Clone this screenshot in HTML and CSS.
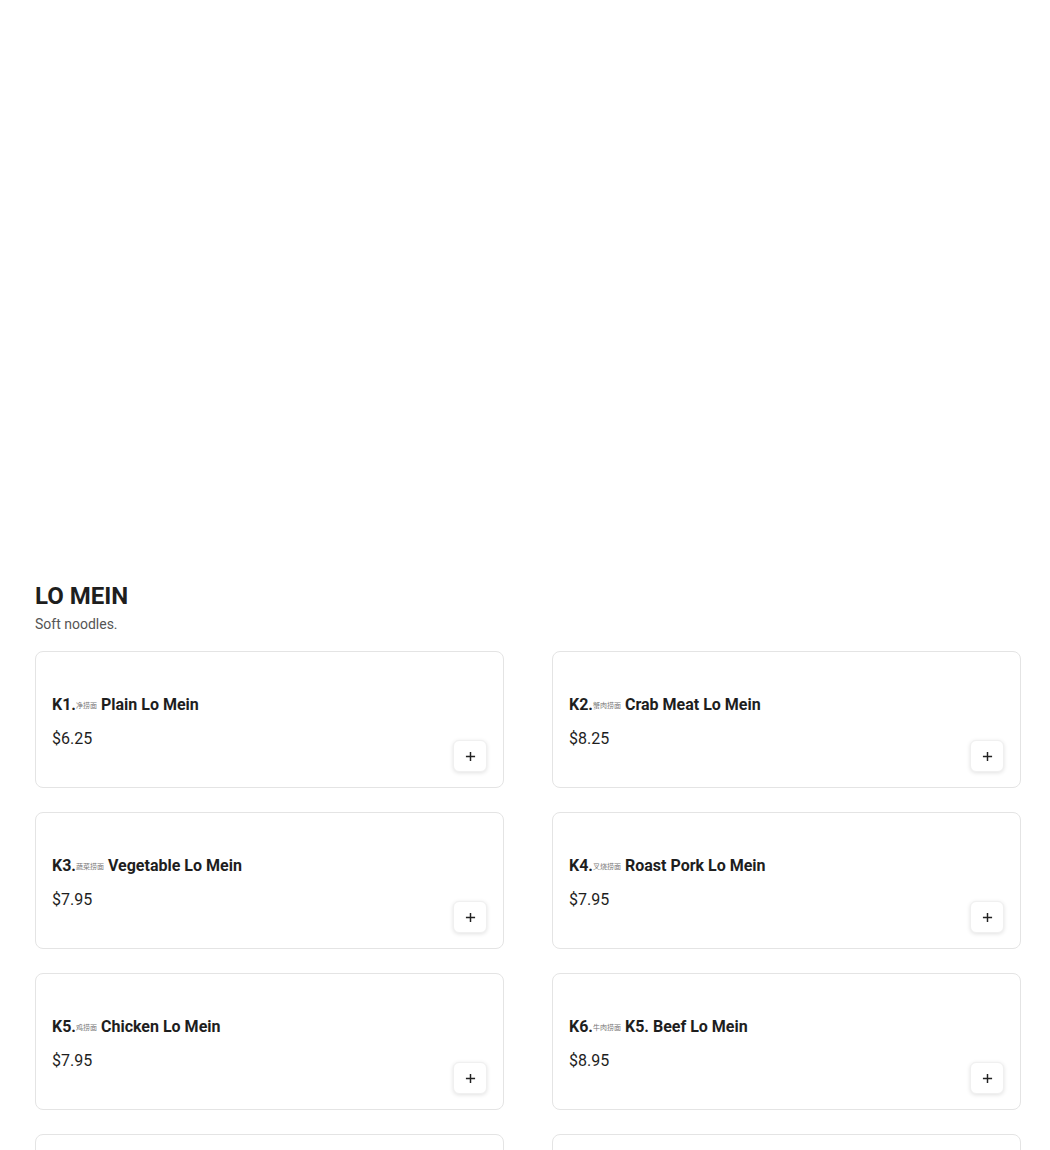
FILE: index.html
```html
<!DOCTYPE html>
<html lang="en">
<head>
<meta charset="utf-8">
<title>Lo Mein</title>
<link rel="stylesheet" href="styles.css">
</head>
<body>
<div class="hero"></div>
<section class="category">
  <h2 class="cat-title">LO MEIN</h2>
  <p class="cat-desc">Soft noodles.</p>
  <div class="grid">
    <div class="card">
      <div class="info">
        <div class="name">K1.<span class="zh">净捞面</span> Plain Lo Mein</div>
        <div class="price">$6.25</div>
      </div>
      <button class="add" aria-label="Add"><svg viewBox="0 0 12 12" width="11" height="11"><path d="M6 1v10M1 6h10" stroke="#222" stroke-width="1.6" fill="none"/></svg></button>
    </div>
    <div class="card">
      <div class="info">
        <div class="name">K2.<span class="zh">蟹肉捞面</span> Crab Meat Lo Mein</div>
        <div class="price">$8.25</div>
      </div>
      <button class="add" aria-label="Add"><svg viewBox="0 0 12 12" width="11" height="11"><path d="M6 1v10M1 6h10" stroke="#222" stroke-width="1.6" fill="none"/></svg></button>
    </div>
    <div class="card">
      <div class="info">
        <div class="name">K3.<span class="zh">蔬菜捞面</span> Vegetable Lo Mein</div>
        <div class="price">$7.95</div>
      </div>
      <button class="add" aria-label="Add"><svg viewBox="0 0 12 12" width="11" height="11"><path d="M6 1v10M1 6h10" stroke="#222" stroke-width="1.6" fill="none"/></svg></button>
    </div>
    <div class="card">
      <div class="info">
        <div class="name">K4.<span class="zh">叉烧捞面</span> Roast Pork Lo Mein</div>
        <div class="price">$7.95</div>
      </div>
      <button class="add" aria-label="Add"><svg viewBox="0 0 12 12" width="11" height="11"><path d="M6 1v10M1 6h10" stroke="#222" stroke-width="1.6" fill="none"/></svg></button>
    </div>
    <div class="card">
      <div class="info">
        <div class="name">K5.<span class="zh">鸡捞面</span> Chicken Lo Mein</div>
        <div class="price">$7.95</div>
      </div>
      <button class="add" aria-label="Add"><svg viewBox="0 0 12 12" width="11" height="11"><path d="M6 1v10M1 6h10" stroke="#222" stroke-width="1.6" fill="none"/></svg></button>
    </div>
    <div class="card">
      <div class="info">
        <div class="name">K6.<span class="zh">牛肉捞面</span> K5. Beef Lo Mein</div>
        <div class="price">$8.95</div>
      </div>
      <button class="add" aria-label="Add"><svg viewBox="0 0 12 12" width="11" height="11"><path d="M6 1v10M1 6h10" stroke="#222" stroke-width="1.6" fill="none"/></svg></button>
    </div>
    <div class="card">
      <div class="info">
        <div class="name">K7.<span class="zh">虾捞面</span> Shrimp Lo Mein</div>
        <div class="price">$8.95</div>
      </div>
      <button class="add" aria-label="Add"><svg viewBox="0 0 12 12" width="11" height="11"><path d="M6 1v10M1 6h10" stroke="#222" stroke-width="1.6" fill="none"/></svg></button>
    </div>
    <div class="card">
      <div class="info">
        <div class="name">K8.<span class="zh">本楼捞面</span> House Special Lo Mein</div>
        <div class="price">$9.25</div>
      </div>
      <button class="add" aria-label="Add"><svg viewBox="0 0 12 12" width="11" height="11"><path d="M6 1v10M1 6h10" stroke="#222" stroke-width="1.6" fill="none"/></svg></button>
    </div>
  </div>
</section>
</body>
</html>
```

FILE: styles.css
```css
* { box-sizing: border-box; }
html, body { margin: 0; padding: 0; background: #fff; }
body {
  font-family: Roboto, "Noto Sans CJK SC", sans-serif;
  color: #1e1e1e;
}
.hero { height: 580px; }
.category { padding: 0 29px 40px 35px; }
.cat-title {
  margin: 0;
  font-size: 24px;
  line-height: 32px;
  font-weight: 700;
  color: #1e1e1e;
}
.cat-desc {
  margin: 2px 0 0;
  font-size: 14px;
  line-height: 20px;
  color: #555;
}
.grid {
  margin-top: 17px;
  display: grid;
  grid-template-columns: 1fr 1fr;
  column-gap: 48px;
  row-gap: 24px;
}
.card {
  min-height: 137px;
  border: 1px solid #e4e4e4;
  border-radius: 8px;
  padding: 16px;
  display: flex;
  align-items: center;
  justify-content: space-between;
  background: #fff;
}
.info {
  display: flex;
  flex-direction: column;
  gap: 9px;
  margin-top: 4px;
}
.name {
  font-size: 16px;
  line-height: 24px;
  font-weight: 700;
  color: #1e1e1e;
}
.zh {
  font-size: 7px;
  font-weight: 400;
  color: #777;
  vertical-align: 2px;
}
.price {
  font-size: 16px;
  line-height: 24px;
  color: #1e1e1e;
}
.add {
  align-self: flex-end;
  width: 34px;
  height: 32px;
  margin-bottom: -1px;
  border: 1px solid #f0f0f0;
  border-radius: 6px;
  background: #fff;
  box-shadow: 0 1px 4px rgba(0,0,0,0.12);
  display: flex;
  align-items: center;
  justify-content: center;
  padding: 0;
  cursor: pointer;
}
.add svg { display: block; }
```
